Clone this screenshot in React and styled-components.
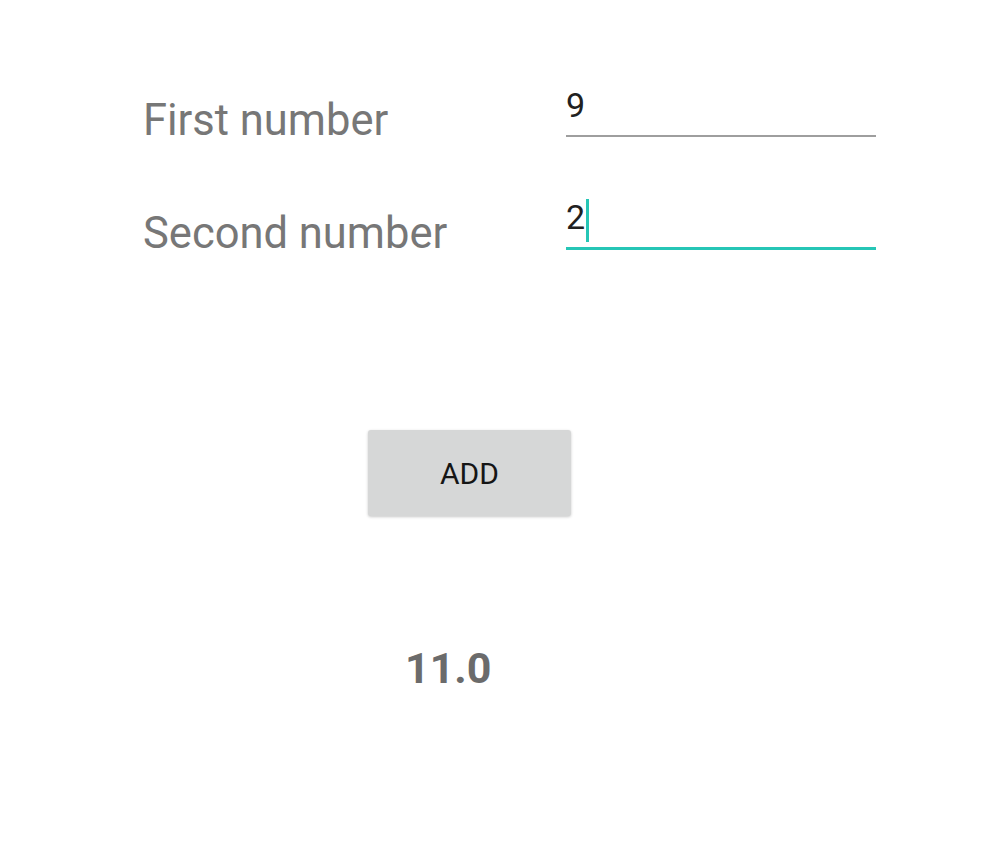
import React from "react";
import styled, { createGlobalStyle } from "styled-components";

const GlobalStyle = createGlobalStyle`
  body {
    margin: 0;
    background: #fff;
    font-family: Roboto, "Noto Sans", sans-serif;
  }
`;

const Screen = styled.div`
  width: 981px;
  height: 846px;
  display: flex;
  flex-direction: column;
  padding-top: 85px;
  box-sizing: border-box;
`;

const Form = styled.div`
  display: flex;
  flex-direction: column;
  gap: 60px;
  padding-left: 143px;
`;

const Row = styled.div`
  display: grid;
  grid-template-columns: 423px 310px;
  align-items: end;
`;

const Label = styled.div`
  font-size: 43.5px;
  line-height: 34px;
  color: #777;
  margin-bottom: -1px;
`;

const Field = styled.div`
  font-size: 34px;
  line-height: 40px;
  color: #212121;
  padding-bottom: 10px;
  border-bottom: ${(p) => (p.$focused ? "3px solid #26c6b6" : "2px solid #9e9e9e")};
`;

const Cursor = styled.span`
  display: inline-block;
  width: 3px;
  height: 43px;
  margin: -3px 0 -13px 1px;
  background: #26c6b6;
`;

const AddButton = styled.button`
  margin: 180px 0 0 368px;
  width: 203px;
  height: 86px;
  border: none;
  border-radius: 3px;
  background: #d6d7d7;
  box-shadow: 0 1px 3px rgba(0, 0, 0, 0.22);
  font-family: Roboto, sans-serif;
  font-size: 30px;
  font-weight: 400;
  color: #151515;
  display: flex;
  align-items: center;
  justify-content: center;
  padding: 0;
`;

const Result = styled.div`
  margin: 127px 0 0 405px;
  font-size: 43px;
  line-height: 50px;
  font-weight: 700;
  color: #6b6b6b;
`;

const App = () => {
  return (
    <Screen>
      <GlobalStyle />
      <Form>
        <Row>
          <Label>First number</Label>
          <Field>9</Field>
        </Row>
        <Row>
          <Label>Second number</Label>
          <Field $focused>
            2<Cursor />
          </Field>
        </Row>
      </Form>
      <AddButton>ADD</AddButton>
      <Result>11.0</Result>
    </Screen>
  );
};

export default App;
